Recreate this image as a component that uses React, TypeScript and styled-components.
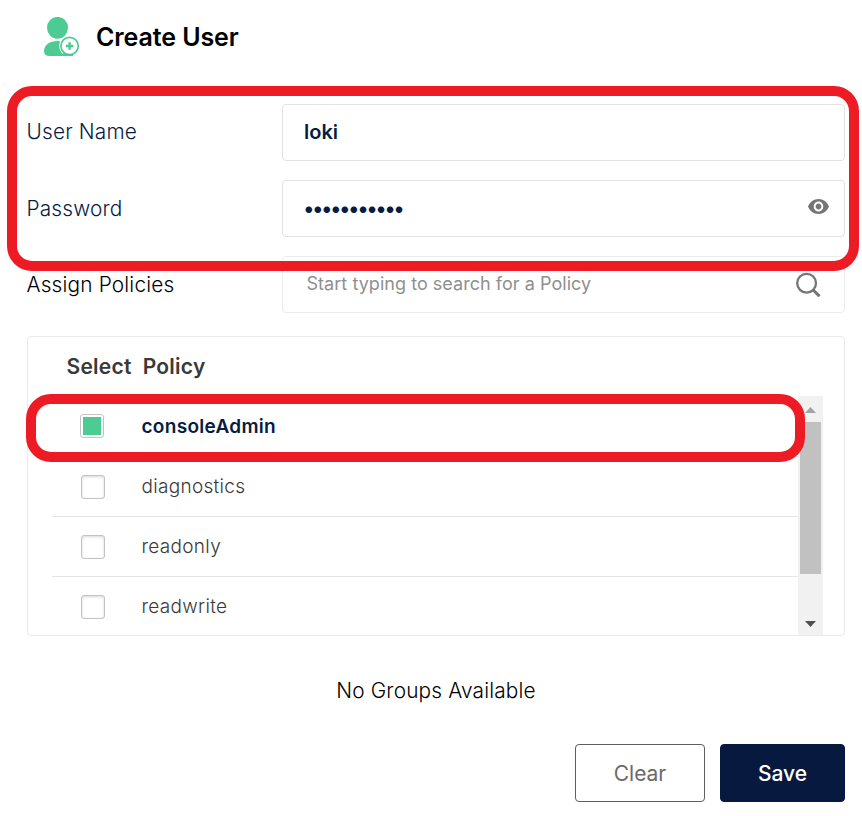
import React from 'react';
import styled, { createGlobalStyle } from 'styled-components';

const GlobalStyle = createGlobalStyle`
  * { box-sizing: border-box; }
  body {
    margin: 0;
    background: #fff;
    font-family: Inter, "Liberation Sans", sans-serif;
    color: #000;
  }
`;

const Page = styled.main`
  position: relative;
  width: 862px;
  height: 816px;
  padding: 0 17px 0 27px;
  display: flex;
  flex-direction: column;
  overflow: hidden;
`;

const Header = styled.header`
  display: flex;
  align-items: center;
  height: 104px;
  padding: 0 0 29px 16px;
  gap: 16px;
`;

const Title = styled.h1`
  margin: 0;
  padding-bottom: 2px;
  font-size: 25px;
  line-height: 30px;
  font-weight: 600;
  letter-spacing: -0.1px;
`;

const Fields = styled.section`
  display: flex;
  flex-direction: column;
  gap: 19px;
`;

const Field = styled.div`
  display: grid;
  grid-template-columns: 255px 1fr;
  align-items: center;
  height: 57px;
`;

const Label = styled.label<{ $color?: string; $lift?: number }>`
  padding-bottom: ${(p) => p.$lift ?? 0}px;
  margin-left: -0.5px;
  font-size: 20.8px;
  line-height: 24px;
  font-weight: 300;
  letter-spacing: 0.18px;
  color: ${(p) => p.$color ?? '#081c42'};
`;

const InputBox = styled.div<{ $right?: number; $light?: boolean }>`
  display: flex;
  align-items: center;
  height: 57px;
  border: 1px solid ${(p) => (p.$light ? '#eaedee' : '#e2e2e2')};
  border-radius: 4px;
  padding: 0 ${(p) => p.$right ?? 15}px 0 21px;
`;

const Input = styled.input`
  flex: 1;
  min-width: 0;
  padding: 0 0 2px;
  border: 0;
  outline: 0;
  background: transparent;
  font: 600 20px/24px Inter, sans-serif;
  color: #081c42;
`;

const PasswordInput = styled(Input)`
  padding: 1px 0 0;
  margin-left: -0.5px;
  font-size: 21px;
  letter-spacing: -1.55px;
`;

const SearchInput = styled(Input)`
  padding: 0 0 1px 2.5px;
  font-size: 18px;
  font-weight: 400;
  letter-spacing: 0.04px;
  &::placeholder { color: #8f8f8f; opacity: 1; }
`;

const PolicyPanel = styled.section`
  flex: none;
  margin-top: 23px;
  height: 300px;
  border: 1px solid #eaeaea;
  border-radius: 4px;
  padding: 0 21px 0 24px;
  display: flex;
  flex-direction: column;
`;

const PanelHead = styled.div`
  height: 59px;
  display: flex;
  align-items: center;
  padding-left: 14.5px;
  gap: 11px;
  font-size: 21px;
  line-height: 24px;
  font-weight: 600;
  letter-spacing: 0.25px;
  color: #393939;
`;

const PanelBody = styled.div`
  flex: 1;
  display: flex;
  min-height: 0;
`;

const Rows = styled.div`
  flex: 1;
  overflow: hidden;
  padding-top: 1px;
`;

const Row = styled.div<{ $selected?: boolean }>`
  display: flex;
  align-items: center;
  height: 60px;
  padding-left: ${(p) => (p.$selected ? 28 : 29)}px;
  gap: ${(p) => (p.$selected ? 37.5 : 36.5)}px;
  border-bottom: 1px solid #e5e5e5;
  border-top: 1px solid transparent;
  font-size: 19px;
  line-height: 22px;
  font-weight: ${(p) => (p.$selected ? 600 : 300)};
  letter-spacing: 0.3px;
  color: ${(p) => (p.$selected ? '#081c42' : '#393939')};
`;

const Check = styled.span<{ $on?: boolean }>`
  width: 24px;
  height: 24px;
  flex: none;
  padding: 2px;
  border: 1px solid #c3c3c3;
  border-radius: 3px;
  background: ${(p) => (p.$on ? '#4ccb92' : '#fff')} content-box;
  box-shadow: ${(p) => (p.$on ? 'none' : 'inset 0 1px 3px rgba(0,0,0,.16)')};
  margin-bottom: ${(p) => (p.$on ? 2 : 0)}px;
`;

const Scrollbar = styled.div`
  width: 25px;
  background: #f1f1f1;
  display: flex;
  flex-direction: column;
  align-items: center;
`;

const ScrollArrow = styled.svg`
  width: 25px;
  height: 26px;
  display: block;
  flex: none;
`;

const Thumb = styled.div`
  width: 21px;
  height: 152px;
  background: #c1c1c1;
  margin-bottom: auto;
`;

const EmptyNote = styled.p`
  margin: 43px 0 0;
  text-align: center;
  font-size: 20.8px;
  line-height: 24px;
  font-weight: 300;
  letter-spacing: 0.18px;
`;

const Actions = styled.footer`
  margin-top: 41px;
  display: flex;
  justify-content: flex-end;
  gap: 15px;
`;

const Button = styled.button<{ $primary?: boolean }>`
  width: ${(p) => (p.$primary ? 125 : 130)}px;
  height: 58px;
  padding: 2px 0 0;
  border: 1px solid ${(p) => (p.$primary ? '#07193e' : '#5e5e5e')};
  border-radius: 4px;
  background: ${(p) => (p.$primary ? '#07193e' : '#fff')};
  color: ${(p) => (p.$primary ? '#fff' : '#6a6a6a')};
  font: ${(p) => (p.$primary ? 500 : 400)} 21px/26px Inter, sans-serif;
`;

/* Annotation frames drawn over the form. */
const Highlight = styled.div<{ $x: number; $y: number; $w: number; $h: number }>`
  position: absolute;
  left: ${(p) => p.$x}px;
  top: ${(p) => p.$y}px;
  width: ${(p) => p.$w}px;
  height: ${(p) => p.$h}px;
  border: 10px solid #ed1c24;
  border-radius: 25px;
  pointer-events: none;
`;

const Eye = styled.svg`
  margin-bottom: 4px;
`;

const UserIcon = () => (
  <svg width="37" height="41" viewBox="0 0 37 41">
    <g fill="#4ccb92">
      <ellipse cx="14.5" cy="10.800" rx="10.5" ry="10.900" />
      <path d="M1 34.2C1 27.800 6.500 24 14.500 24c6 0 13 3 13 8v6.900H6.500C3 38.900 1 37.400 1 34.200z" />
    </g>
    <circle cx="26.600" cy="29" r="10.500" fill="#fff" />
    <path d="M20 38.900v-4l10 2.500v1.500z" fill="#4ccb92" />
    <circle cx="26.600" cy="29" r="8.700" fill="#fff" stroke="#4ccb92" strokeWidth="1.700" />
    <path d="M26.600 25.200v7.600M22.800 29h7.600" stroke="#4ccb92" strokeWidth="2.400" />
  </svg>
);

const EyeIcon = () => (
  <Eye width="21" height="15" viewBox="1 4.500 22 15" preserveAspectRatio="none">
    <path
      fill="#757575"
      d="M12 4.500C7 4.500 2.730 7.610 1 12c1.730 4.390 6 7.500 11 7.500s9.270-3.110 11-7.500c-1.730-4.390-6-7.500-11-7.500zM12 17c-2.760 0-5-2.240-5-5s2.240-5 5-5 5 2.240 5 5-2.240 5-5 5zm0-8c-1.660 0-3 1.340-3 3s1.340 3 3 3 3-1.340 3-3-1.340-3-3-3z"
    />
  </Eye>
);

const SearchIcon = () => (
  <svg width="25" height="25" viewBox="0 0 25 25" fill="none" stroke="#757575">
    <circle cx="10.600" cy="11.200" r="9.400" strokeWidth="2.300" />
    <path d="M17.200 18l6.300 6.300" strokeWidth="3" />
  </svg>
);

const policies = [
  { name: 'consoleAdmin', selected: true },
  { name: 'diagnostics' },
  { name: 'readonly' },
  { name: 'readwrite' },
];

export default function App() {
  return (
    <>
      <GlobalStyle />
      <Page>
        <Header>
          <UserIcon />
          <Title>Create User</Title>
        </Header>
        <Fields>
          <Field>
            <Label htmlFor="user" $lift={2}>User Name</Label>
            <InputBox>
              <Input id="user" defaultValue="loki" />
            </InputBox>
          </Field>
          <Field>
            <Label htmlFor="password">Password</Label>
            <InputBox>
              <PasswordInput id="password" type="password" defaultValue="abcdefghijk" />
              <EyeIcon />
            </InputBox>
          </Field>
          <Field>
            <Label htmlFor="policy" $color="#000">Assign Policies</Label>
            <InputBox $right={23} $light>
              <SearchInput id="policy" placeholder="Start typing to search for a Policy" />
              <SearchIcon />
            </InputBox>
          </Field>
        </Fields>
        <PolicyPanel>
          <PanelHead>
            <span>Select</span>
            <span>Policy</span>
          </PanelHead>
          <PanelBody>
            <Rows>
              {policies.map((p) => (
                <Row key={p.name} $selected={p.selected}>
                  <Check $on={p.selected} />
                  <span>{p.name}</span>
                </Row>
              ))}
            </Rows>
            <Scrollbar>
              <ScrollArrow viewBox="0 0 25 26"><path d="M7 17l5.500-6 5.500 6z" fill="#a3a3a3" /></ScrollArrow>
              <Thumb />
              <ScrollArrow viewBox="0 0 25 26"><path d="M7 12h11l-5.500 6z" fill="#505050" /></ScrollArrow>
            </Scrollbar>
          </PanelBody>
        </PolicyPanel>
        <EmptyNote>No Groups Available</EmptyNote>
        <Actions>
          <Button type="button">Clear</Button>
          <Button type="button" $primary>Save</Button>
        </Actions>
        <Highlight $x={7} $y={86} $w={852} $h={185} />
        <Highlight $x={26} $y={394} $w={779} $h={68} />
      </Page>
    </>
  );
}
